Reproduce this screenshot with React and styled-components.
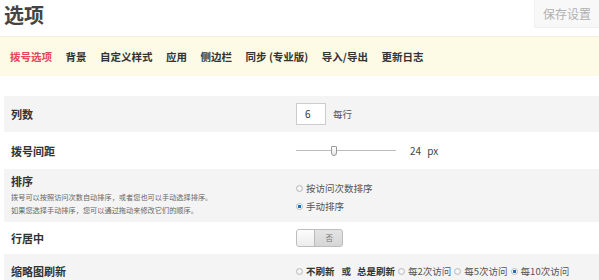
import React from "react";
import styled, { createGlobalStyle } from "styled-components";

const GlobalStyle = createGlobalStyle`
  html, body {
    margin: 0;
    padding: 0;
    background: #fff;
    font-family: "Noto Sans CJK SC", "Noto Sans", sans-serif;
    color: #333;
  }
`;

const Page = styled.div`
  width: 599px;
  height: 280px;
  overflow: hidden;
`;

const Header = styled.div`
  display: flex;
  justify-content: space-between;
  align-items: flex-start;
  height: 36px;
`;

const Title = styled.h1`
  margin: 2px 0 0 4px;
  font-size: 20px;
  line-height: 26px;
  font-weight: 700;
  color: #444;
`;

const SaveButton = styled.button`
  width: 65px;
  height: 28px;
  border: 1px solid #f0f0f0;
  border-top: none;
  border-right: none;
  background: #f8f8f8;
  color: #b0b0b0;
  font-family: inherit;
  font-size: 12px;
  padding: 0;
`;

const Nav = styled.nav`
  display: flex;
  align-items: center;
  gap: 13.5px;
  height: 39px;
  padding-left: 10px;
  background: #fdfae6;
  border-top: 1px solid #f3f0dc;
`;

const NavItem = styled.span`
  font-size: 10.5px;
  font-weight: 700;
  color: ${(p) => (p.active ? "#e6455b" : "#333")};
`;

const Table = styled.div`
  margin: 20px 0 0 4px;
`;

const Row = styled.div`
  display: flex;
  align-items: ${(p) => (p.top ? "flex-start" : "center")};
  height: ${(p) => p.h}px;
  background: ${(p) => (p.shaded ? "#f4f4f4" : "#fff")};
`;

const LabelCell = styled.div`
  width: 285px;
  padding-left: 7px;
  padding-top: ${(p) => (p.top ? "4px" : "0")};
`;

const Label = styled.div`
  font-size: 11px;
  font-weight: 700;
  color: #333;
  line-height: 16px;
`;

const Help = styled.div`
  font-size: 7.2px;
  line-height: 13px;
  color: #666;
  margin-top: 2px;
`;

const ValueCell = styled.div`
  display: flex;
  flex-direction: ${(p) => (p.column ? "column" : "row")};
  align-items: ${(p) => (p.column ? "flex-start" : "center")};
  gap: ${(p) => p.gap || 0}px;
  padding-top: ${(p) => p.pt || 0}px;
  font-size: 9.5px;
  color: #555;
`;

const NumberBox = styled.div`
  box-sizing: border-box;
  width: 30px;
  height: 22px;
  border: 1px solid #ccc;
  background: #fff;
  font-size: 10px;
  line-height: 20px;
  padding-left: 8px;
  color: #333;
  margin-right: 7px;
`;

const Slider = styled.div`
  position: relative;
  width: 100px;
  height: 10px;
  margin-right: 14px;
`;

const Track = styled.div`
  position: absolute;
  left: 0;
  right: 0;
  top: 4px;
  height: 1px;
  background: #bbb;
`;

const Thumb = styled.div`
  position: absolute;
  left: 35px;
  top: 0;
  width: 6px;
  height: 10px;
  box-sizing: border-box;
  border: 1px solid #999;
  border-radius: 1px 1px 3px 3px;
  background: linear-gradient(#fff, #e6e6e6);
`;

const Value = styled.span`
  font-size: 10px;
  color: #444;
  word-spacing: 4px;
`;

const RadioLine = styled.label`
  display: flex;
  align-items: center;
  gap: 3px;
  font-size: 9.5px;
  color: ${(p) => (p.strong ? "#333" : "#555")};
  font-weight: ${(p) => (p.strong ? 700 : 400)};
  white-space: nowrap;
`;

const Dot = styled.span`
  box-sizing: border-box;
  width: 7px;
  height: 7px;
  border-radius: 50%;
  border: 1px solid #bbb;
  background: ${(p) =>
    p.on
      ? "radial-gradient(circle, #1e6fb3 0 1.5px, #fff 2px)"
      : "radial-gradient(circle, #fff, #e2e2e2)"};
  flex-shrink: 0;
`;

const Toggle = styled.div`
  display: flex;
  box-sizing: border-box;
  width: 47px;
  height: 18px;
  border: 1px solid #bdbdbd;
  border-radius: 3px;
  overflow: hidden;
  background: linear-gradient(#e4e4e4, #d6d6d6);
`;

const Knob = styled.div`
  width: 17px;
  border-right: 1px solid #bbb;
  background: linear-gradient(#fdfdfd, #ececec);
`;

const ToggleText = styled.div`
  flex: 1;
  text-align: right;
  padding-right: 9px;
  font-size: 7.5px;
  line-height: 16px;
  color: #777;
`;

const Or = styled.span`
  font-size: 9.5px;
  font-weight: 700;
  color: #444;
  margin: 0 3px 0 4px;
`;

const navItems = ["拨号选项", "背景", "自定义样式", "应用", "侧边栏", "同步 (专业版)", "导入/导出", "更新日志"];

export default function App() {
  return (
    <Page>
      <GlobalStyle />
      <Header>
        <Title>选项</Title>
        <SaveButton>保存设置</SaveButton>
      </Header>
      <Nav>
        {navItems.map((n, i) => (
          <NavItem key={n} active={i === 0}>{n}</NavItem>
        ))}
      </Nav>
      <Table>
        <Row shaded h={36}>
          <LabelCell><Label>列数</Label></LabelCell>
          <ValueCell>
            <NumberBox>6</NumberBox>
            每行
          </ValueCell>
        </Row>
        <Row h={37}>
          <LabelCell><Label>拨号间距</Label></LabelCell>
          <ValueCell>
            <Slider>
              <Track />
              <Thumb />
            </Slider>
            <Value>24 px</Value>
          </ValueCell>
        </Row>
        <Row shaded top h={53}>
          <LabelCell top>
            <Label>排序</Label>
            <Help>
              拨号可以按照访问次数自动排序，或者您也可以手动选择排序。
              <br />
              如果您选择手动排序，您可以通过拖动来修改它们的顺序。
            </Help>
          </LabelCell>
          <ValueCell column gap={4} pt={12}>
            <RadioLine><Dot />按访问次数排序</RadioLine>
            <RadioLine><Dot on />手动排序</RadioLine>
          </ValueCell>
        </Row>
        <Row h={32}>
          <LabelCell><Label>行居中</Label></LabelCell>
          <ValueCell>
            <Toggle>
              <Knob />
              <ToggleText>否</ToggleText>
            </Toggle>
          </ValueCell>
        </Row>
        <Row shaded h={34}>
          <LabelCell><Label>缩略图刷新</Label></LabelCell>
          <ValueCell gap={3}>
            <RadioLine strong><Dot />不刷新</RadioLine>
            <Or>或</Or>
            <RadioLine strong>总是刷新</RadioLine>
            <RadioLine><Dot />每2次访问</RadioLine>
            <RadioLine><Dot />每5次访问</RadioLine>
            <RadioLine><Dot on />每10次访问</RadioLine>
          </ValueCell>
        </Row>
      </Table>
    </Page>
  );
}
